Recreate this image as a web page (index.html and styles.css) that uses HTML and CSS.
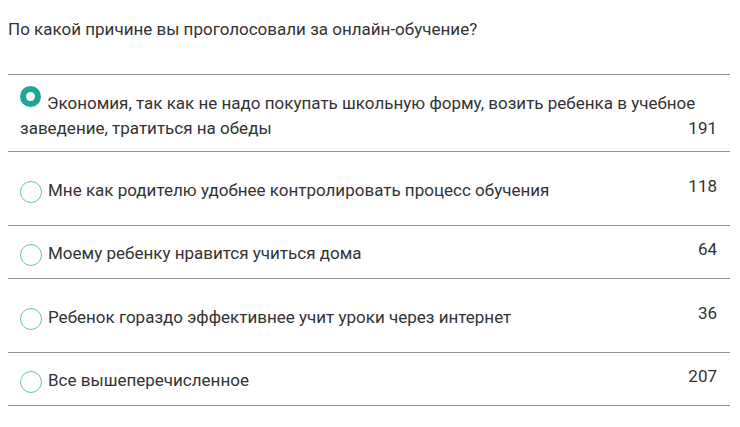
FILE: index.html
```html
<!DOCTYPE html>
<html lang="ru">
<head>
<meta charset="utf-8">
<title>Опрос</title>
<link rel="stylesheet" href="styles.css">
</head>
<body>
<div class="poll">
  <p class="question">По какой причине вы проголосовали за онлайн-обучение?</p>
  <ul class="options">
    <li class="option option-first">
      <span class="radio radio-on"></span>Экономия, так как не надо покупать школьную форму, возить ребенка в учебное заведение, тратиться на обеды<span class="count count-wrap">191</span>
    </li>
    <li class="option option-tall">
      <span class="radio"></span>Мне как родителю удобнее контролировать процесс обучения<span class="count">118</span>
    </li>
    <li class="option">
      <span class="radio"></span>Моему ребенку нравится учиться дома<span class="count">64</span>
    </li>
    <li class="option option-tall">
      <span class="radio"></span>Ребенок гораздо эффективнее учит уроки через интернет<span class="count">36</span>
    </li>
    <li class="option option-last">
      <span class="radio"></span>Все вышеперечисленное<span class="count">207</span>
    </li>
  </ul>
</div>
</body>
</html>
```

FILE: styles.css
```css
html, body {
  margin: 0;
  padding: 0;
  background: #ffffff;
}

body {
  padding: 8px;
  font-family: Roboto, "Noto Sans", sans-serif;
  font-size: 17px;
  color: #333333;
}

.poll {
  width: 722px;
}

.question {
  margin: 0;
  padding-top: 11px;
  line-height: 20px;
}

.options {
  list-style: none;
  margin: 35px 0 0 0;
  padding: 0;
}

.option {
  display: flow-root;
  border-top: 1px solid #929292;
  padding: 15px 13px 12px 12px;
  line-height: 25px;
}

.option-first {
  padding-top: 11px;
  padding-bottom: 10px;
}

.option-last {
  border-bottom: 1px solid #929292;
}

.option-tall {
  padding-top: 26px;
  padding-bottom: 22px;
}

.count {
  float: right;
  line-height: 17px;
  margin-left: 12px;
}

.count-wrap {
  line-height: 25px;
}

.radio {
  display: inline-block;
  box-sizing: border-box;
  width: 22px;
  height: 22px;
  border-radius: 50%;
  border: 1.5px solid #62c4b8;
  margin-right: 6px;
  vertical-align: -7px;
}

.radio-on {
  width: 21px;
  height: 21px;
  border: 6.5px solid #1ea597;
  vertical-align: 2px;
}
```
